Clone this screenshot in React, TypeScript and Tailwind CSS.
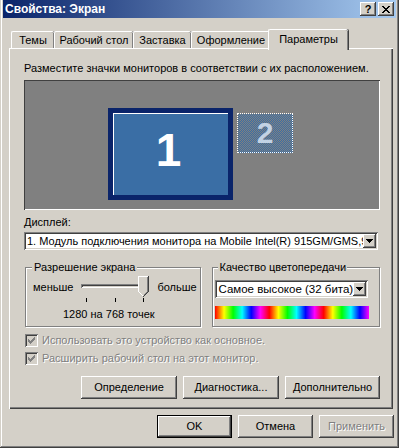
import React from "react";

const raised =
  "shadow-[inset_-1px_-1px_#404040,inset_1px_1px_#fff,inset_-2px_-2px_#808080,inset_2px_2px_#d4d0c8]";
const sunken =
  "shadow-[inset_1px_1px_#808080,inset_-1px_-1px_#fff,inset_2px_2px_#404040,inset_-2px_-2px_#d4d0c8]";
const etched =
  "border border-[#808080] shadow-[1px_1px_0_#fff,inset_1px_1px_0_#fff]";
const disabledText = "text-[#808080] [text-shadow:1px_1px_0_#fff]";

const tabs = [
  { label: "Темы", w: "w-[43px]" },
  { label: "Рабочий стол", w: "w-[79px]" },
  { label: "Заставка", w: "w-[58px]" },
  { label: "Оформление", w: "w-[79px]" },
];

const ArrowDown = () => (
  <svg width="7" height="4" viewBox="0 0 7 4" shapeRendering="crispEdges">
    <polygon points="0,0 7,0 3.5,4" fill="#000" />
  </svg>
);

const ComboButton = () => (
  <div className={`w-[13px] h-[14px] shrink-0 bg-[#d4d0c8] flex items-center justify-center ${raised}`}>
    <ArrowDown />
  </div>
);

const Check = () => (
  <div className={`w-[13px] h-[13px] bg-[#d4d0c8] flex items-center justify-center ${sunken}`}>
    <svg width="7" height="7" viewBox="0 0 7 7" shapeRendering="crispEdges">
      <path d="M0 2h1v1h1v1h1v-1h1v-1h1v-1h1v-1h1v3h-1v1h-1v1h-1v1h-1v1h-1v-1h-1v-1h-1z" fill="#808080" />
    </svg>
  </div>
);

const Button = ({ label, w, disabled, isDefault }: { label: string; w: string; disabled?: boolean; isDefault?: boolean }) => (
  <div
    className={`${w} h-[23px] bg-[#d4d0c8] flex items-center justify-center ${
      isDefault ? "border border-black" : ""
    } ${raised} ${disabled ? disabledText : ""}`}
  >
    {label}
  </div>
);

const SliderThumb = () => (
  <svg width="11" height="22" viewBox="0 0 11 22" shapeRendering="crispEdges">
    <polygon points="0,0 11,0 11,16 5.5,22 0,16" fill="#d4d0c8" />
    <path d="M0 0h10v1h-9v15h-1z" fill="#fff" />
    <path d="M1 16h1v1h1v1h1v1h1v1h-1v-1h-1v-1h-1v-1h-1z" fill="#fff" />
    <path d="M10 0h1v16h-1v1h-1v1h-1v1h-1v1h-1v1h-1v-1h1v-1h1v-1h1v-1h1v-1h1z" fill="#404040" />
    <path d="M9 1h1v15h-1v1h-1v1h-1v1h-1v-1h1v-1h1v-1h1z" fill="#808080" />
  </svg>
);

export default function App() {
  return (
    <div
      className="w-[399px] h-[448px] bg-[#d4d0c8] flex flex-col text-[11px] leading-[13px] text-black font-['Liberation_Sans',Arial,sans-serif] shadow-[inset_-1px_-1px_#404040,inset_1px_0_#d4d0c8,inset_-2px_-2px_#808080,inset_2px_0_#fff]"
    >
      {/* title bar */}
      <div className="mx-[3px] h-[18px] flex items-center justify-between pl-[2px] pr-[2px] bg-[linear-gradient(to_right,#0a246a,#a6caf0)]">
        <span className="text-white font-bold text-[12px]">Свойства: Экран</span>
        <div className="flex gap-[2px]">
          <div className={`w-[16px] h-[14px] bg-[#d4d0c8] flex items-center justify-center font-bold text-[11px] leading-none ${raised}`}>
            ?
          </div>
          <div className={`w-[16px] h-[14px] bg-[#d4d0c8] flex items-center justify-center ${raised}`}>
            <svg width="8" height="7" viewBox="0 0 8 7" shapeRendering="crispEdges">
              <path d="M0 0h2v1h1v1h2v-1h1v-1h2v1h-1v1h-1v1h-1v1h1v1h1v1h1v1h-2v-1h-1v-1h-2v1h-1v1h-2v-1h1v-1h1v-1h1v-1h-1v-1h-1v-1h-1z" fill="#000" />
            </svg>
          </div>
        </div>
      </div>

      {/* tabs */}
      <div className="mt-[11px] ml-[11px] h-[19px] flex items-end">
        {tabs.map((t) => (
          <div
            key={t.label}
            className={`${t.w} h-[17px] flex items-center justify-center border-l border-t border-white rounded-tl-[2px] rounded-tr-[2px] shadow-[inset_-1px_0_#808080,1px_0_#404040]`}
          >
            {t.label}
          </div>
        ))}
        <div className="relative z-10 w-[80px] -ml-[2px] h-[21px] -mb-[2px] pb-[2px] bg-[#d4d0c8] flex items-center justify-center border-l border-t border-white rounded-tl-[2px] rounded-tr-[2px] shadow-[inset_-1px_0_#808080,1px_0_#404040]">
          Параметры
        </div>
      </div>

      {/* panel */}
      <div
        className={`ml-[9px] w-[384px] h-[361px] pl-[15px] pr-[13px] pt-[14px] flex flex-col shadow-[inset_1px_1px_#fff,inset_-1px_-1px_#404040,inset_-2px_-2px_#808080]`}
      >
        <div>Разместите значки мониторов в соответствии с их расположением.</div>

        <div className="relative mt-[5px] h-[130px] bg-[#808080] shadow-[inset_1px_1px_#404040,inset_-1px_-1px_#fff]">
          <div className="absolute left-[84px] top-[28px] w-[125px] h-[92px] border-[4px] border-[#0a246a] bg-[#0a246a] p-[1px]">
            <div className="w-full h-full bg-[#3a6ea5] shadow-[inset_1px_1px_0_#fff] flex items-center justify-center pb-[8px] pr-[4px]">
              <span className="text-white font-bold text-[46px] leading-none">1</span>
            </div>
          </div>
          <div className="absolute left-[213px] top-[33px] w-[56px] h-[40px] border border-dotted border-white bg-[image:repeating-conic-gradient(#3a6ea5_0%_25%,#808080_0%_50%)] bg-[length:2px_2px] flex items-center justify-center">
            <span className="text-[#c2d2e4] font-bold text-[30px] leading-none">2</span>
          </div>
        </div>

        <div className="mt-[6px]">Дисплей:</div>
        <div className={`mt-[3px] w-[354px] h-[18px] bg-white flex items-center pl-[3px] pr-[2px] ${sunken}`}>
          <span className="flex-1 overflow-hidden whitespace-nowrap">
            1. Модуль подключения монитора на Mobile Intel(R) 915GM/GMS,9
          </span>
          <ComboButton />
        </div>

        <div className="mt-[17px] flex">
          {/* resolution group */}
          <div className={`relative ml-[1px] w-[177px] h-[60px] ${etched}`}>
            <span className="absolute -top-[7px] left-[6px] px-[2px] bg-[#d4d0c8]">Разрешение экрана</span>
            <div className="mt-[8px] ml-[7px] flex items-center h-[22px] gap-[8px]">
              <span>меньше</span>
              <div className="relative w-[68px] h-[22px]">
                <div className="absolute left-0 right-[1px] top-[8px] h-[4px] shadow-[inset_1px_1px_#808080,inset_-1px_-1px_#fff,inset_2px_2px_#404040]" />
                <div className="absolute left-[57px] top-0">
                  <SliderThumb />
                </div>
              </div>
              <span>больше</span>
            </div>
            <div className="relative h-[5px]">
              <div className="absolute left-[60px] top-0 w-[1px] h-[4px] bg-black" />
              <div className="absolute left-[89px] top-0 w-[1px] h-[4px] bg-black" />
              <div className="absolute left-[117px] top-0 w-[1px] h-[4px] bg-black" />
            </div>
            <div className="mt-[5px] pl-[37px]">1280 на 768 точек</div>
          </div>

          {/* color group */}
          <div className={`relative ml-[11px] w-[168px] h-[60px] ${etched}`}>
            <span className="absolute -top-[7px] left-[5px] px-[1px] bg-[#d4d0c8]">Качество цветопередачи</span>
            <div className={`mt-[12px] ml-[2px] w-[153px] h-[18px] bg-white flex items-center pl-[3px] pr-[2px] ${sunken}`}>
              <span className="flex-1 whitespace-nowrap text-[11.5px]">Самое высокое (32 бита)</span>
              <ComboButton />
            </div>
            <div className="mt-[8px] ml-[2px] w-[154px] h-[13px] bg-[image:linear-gradient(to_right,#ff0000,#ffff00,#00ff00,#00ffff,#0000ff,#ff00ff,#ff0000,#ffff00,#00ff00,#00ffff,#0000ff,#ff00ff,#ff0000,#ffff00,#00ff00,#00ffff,#0000ff,#ff00ff)]" />
          </div>
        </div>

        <div className="mt-[7px] flex items-center gap-[4px] ml-[1px]">
          <Check />
          <span className={disabledText}>Использовать это устройство как основное.</span>
        </div>
        <div className="mt-[5px] flex items-center gap-[4px] ml-[1px]">
          <Check />
          <span className={disabledText}>Расширить рабочий стол на этот монитор.</span>
        </div>

        <div className="mt-[11px] flex justify-end gap-[6px]">
          <Button label="Определение" w="w-[96px]" />
          <Button label="Диагностика..." w="w-[96px]" />
          <Button label="Дополнительно" w="w-[95px]" />
        </div>
      </div>

      {/* bottom buttons */}
      <div className="mt-[6px] mr-[5px] flex justify-end gap-[6px]">
        <Button label="OK" w="w-[75px]" isDefault />
        <Button label="Отмена" w="w-[75px]" />
        <Button label="Применить" w="w-[75px]" disabled />
      </div>
    </div>
  );
}
